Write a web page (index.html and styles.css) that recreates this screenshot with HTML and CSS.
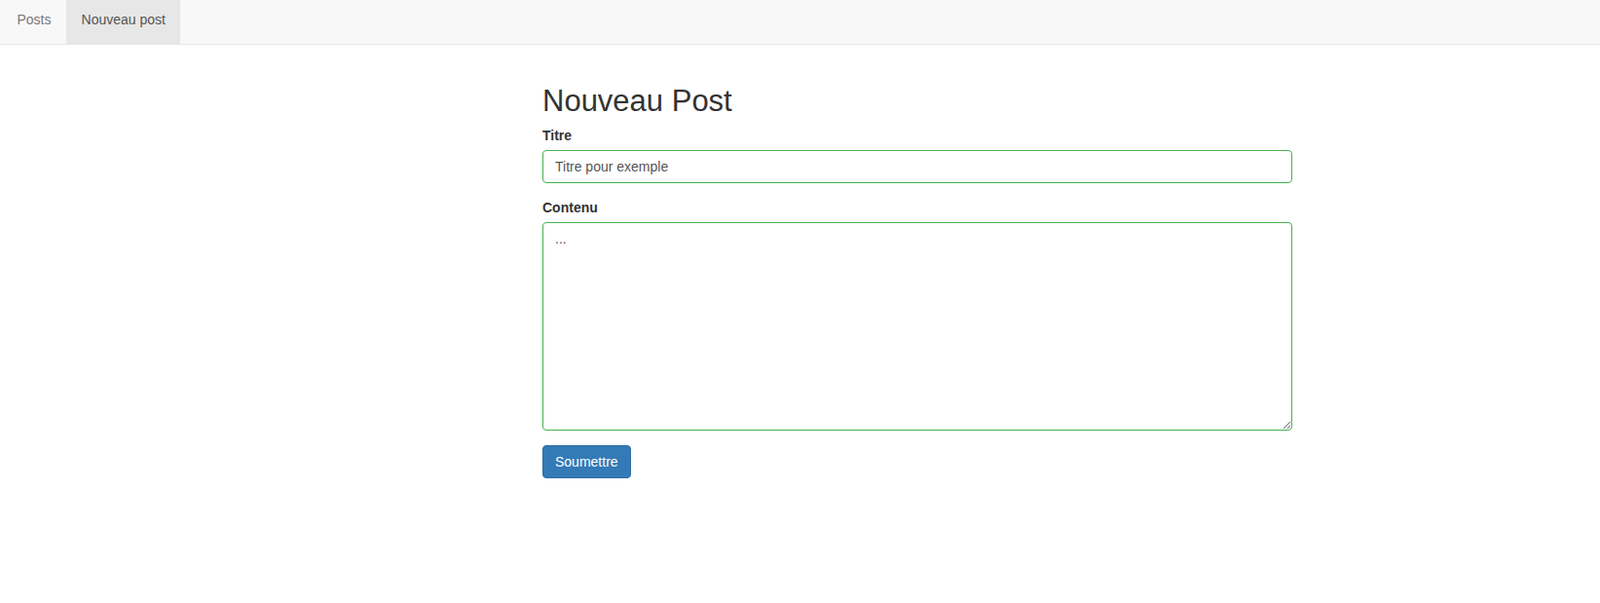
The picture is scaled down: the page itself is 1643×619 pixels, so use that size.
FILE: index.html
```html
<!DOCTYPE html>
<html lang="fr">
<head>
<meta charset="utf-8">
<title>Nouveau Post</title>
<link rel="stylesheet" href="styles.css">
</head>
<body>
<nav class="navbar">
  <ul class="nav">
    <li><a class="nav-link" href="#">Posts</a></li>
    <li><a class="nav-link active" href="#">Nouveau post</a></li>
  </ul>
</nav>
<main class="content">
  <h2 class="title">Nouveau Post</h2>
  <form class="post-form">
    <div class="form-group">
      <label class="label" for="titre">Titre</label>
      <input class="control" id="titre" type="text" value="Titre pour exemple">
    </div>
    <div class="form-group">
      <label class="label" for="contenu">Contenu</label>
      <textarea class="control area" id="contenu" rows="10">...</textarea>
    </div>
    <button class="btn" type="button">Soumettre</button>
  </form>
</main>
</body>
</html>
```
FILE: styles.css
```css
* { box-sizing: border-box; }
html, body { margin: 0; padding: 0; }
body {
  font-family: "Liberation Sans", Arial, sans-serif;
  font-size: 14px;
  line-height: 20px;
  color: #333;
  background: #fff;
}
.navbar {
  height: 46px;
  background: #f8f8f8;
  border-bottom: 1px solid #e7e7e7;
}
.nav {
  list-style: none;
  margin: 0;
  padding: 0 0 0 2px;
  display: flex;
  height: 45px;
}
.nav-link {
  display: block;
  height: 45px;
  padding: 10px 15.5px 0;
  color: #777;
  text-decoration: none;
}
.nav-link.active {
  background: #e7e7e7;
  color: #555;
}
.content {
  margin-left: 557px;
  width: 770px;
}
.title {
  margin: 41px 0 8px;
  font-size: 31px;
  line-height: 34px;
  font-weight: 500;
  color: #333;
}
.form-group { margin-bottom: 15px; }
.label {
  display: block;
  font-weight: bold;
  margin-bottom: 5px;
}
.control {
  display: block;
  width: 100%;
  height: 34px;
  padding: 6px 12px;
  font-family: inherit;
  font-size: 14px;
  line-height: 20px;
  color: #555;
  background: #fff;
  border: 1px solid #45b04f;
  border-radius: 4px;
  outline: none;
}
.area {
  height: 214px;
  resize: vertical;
}
.btn {
  display: inline-block;
  height: 34px;
  padding: 6px 12px;
  font-family: inherit;
  font-size: 14px;
  line-height: 20px;
  color: #fff;
  background: #337ab7;
  border: 1px solid #2e6da4;
  border-radius: 4px;
}
```
